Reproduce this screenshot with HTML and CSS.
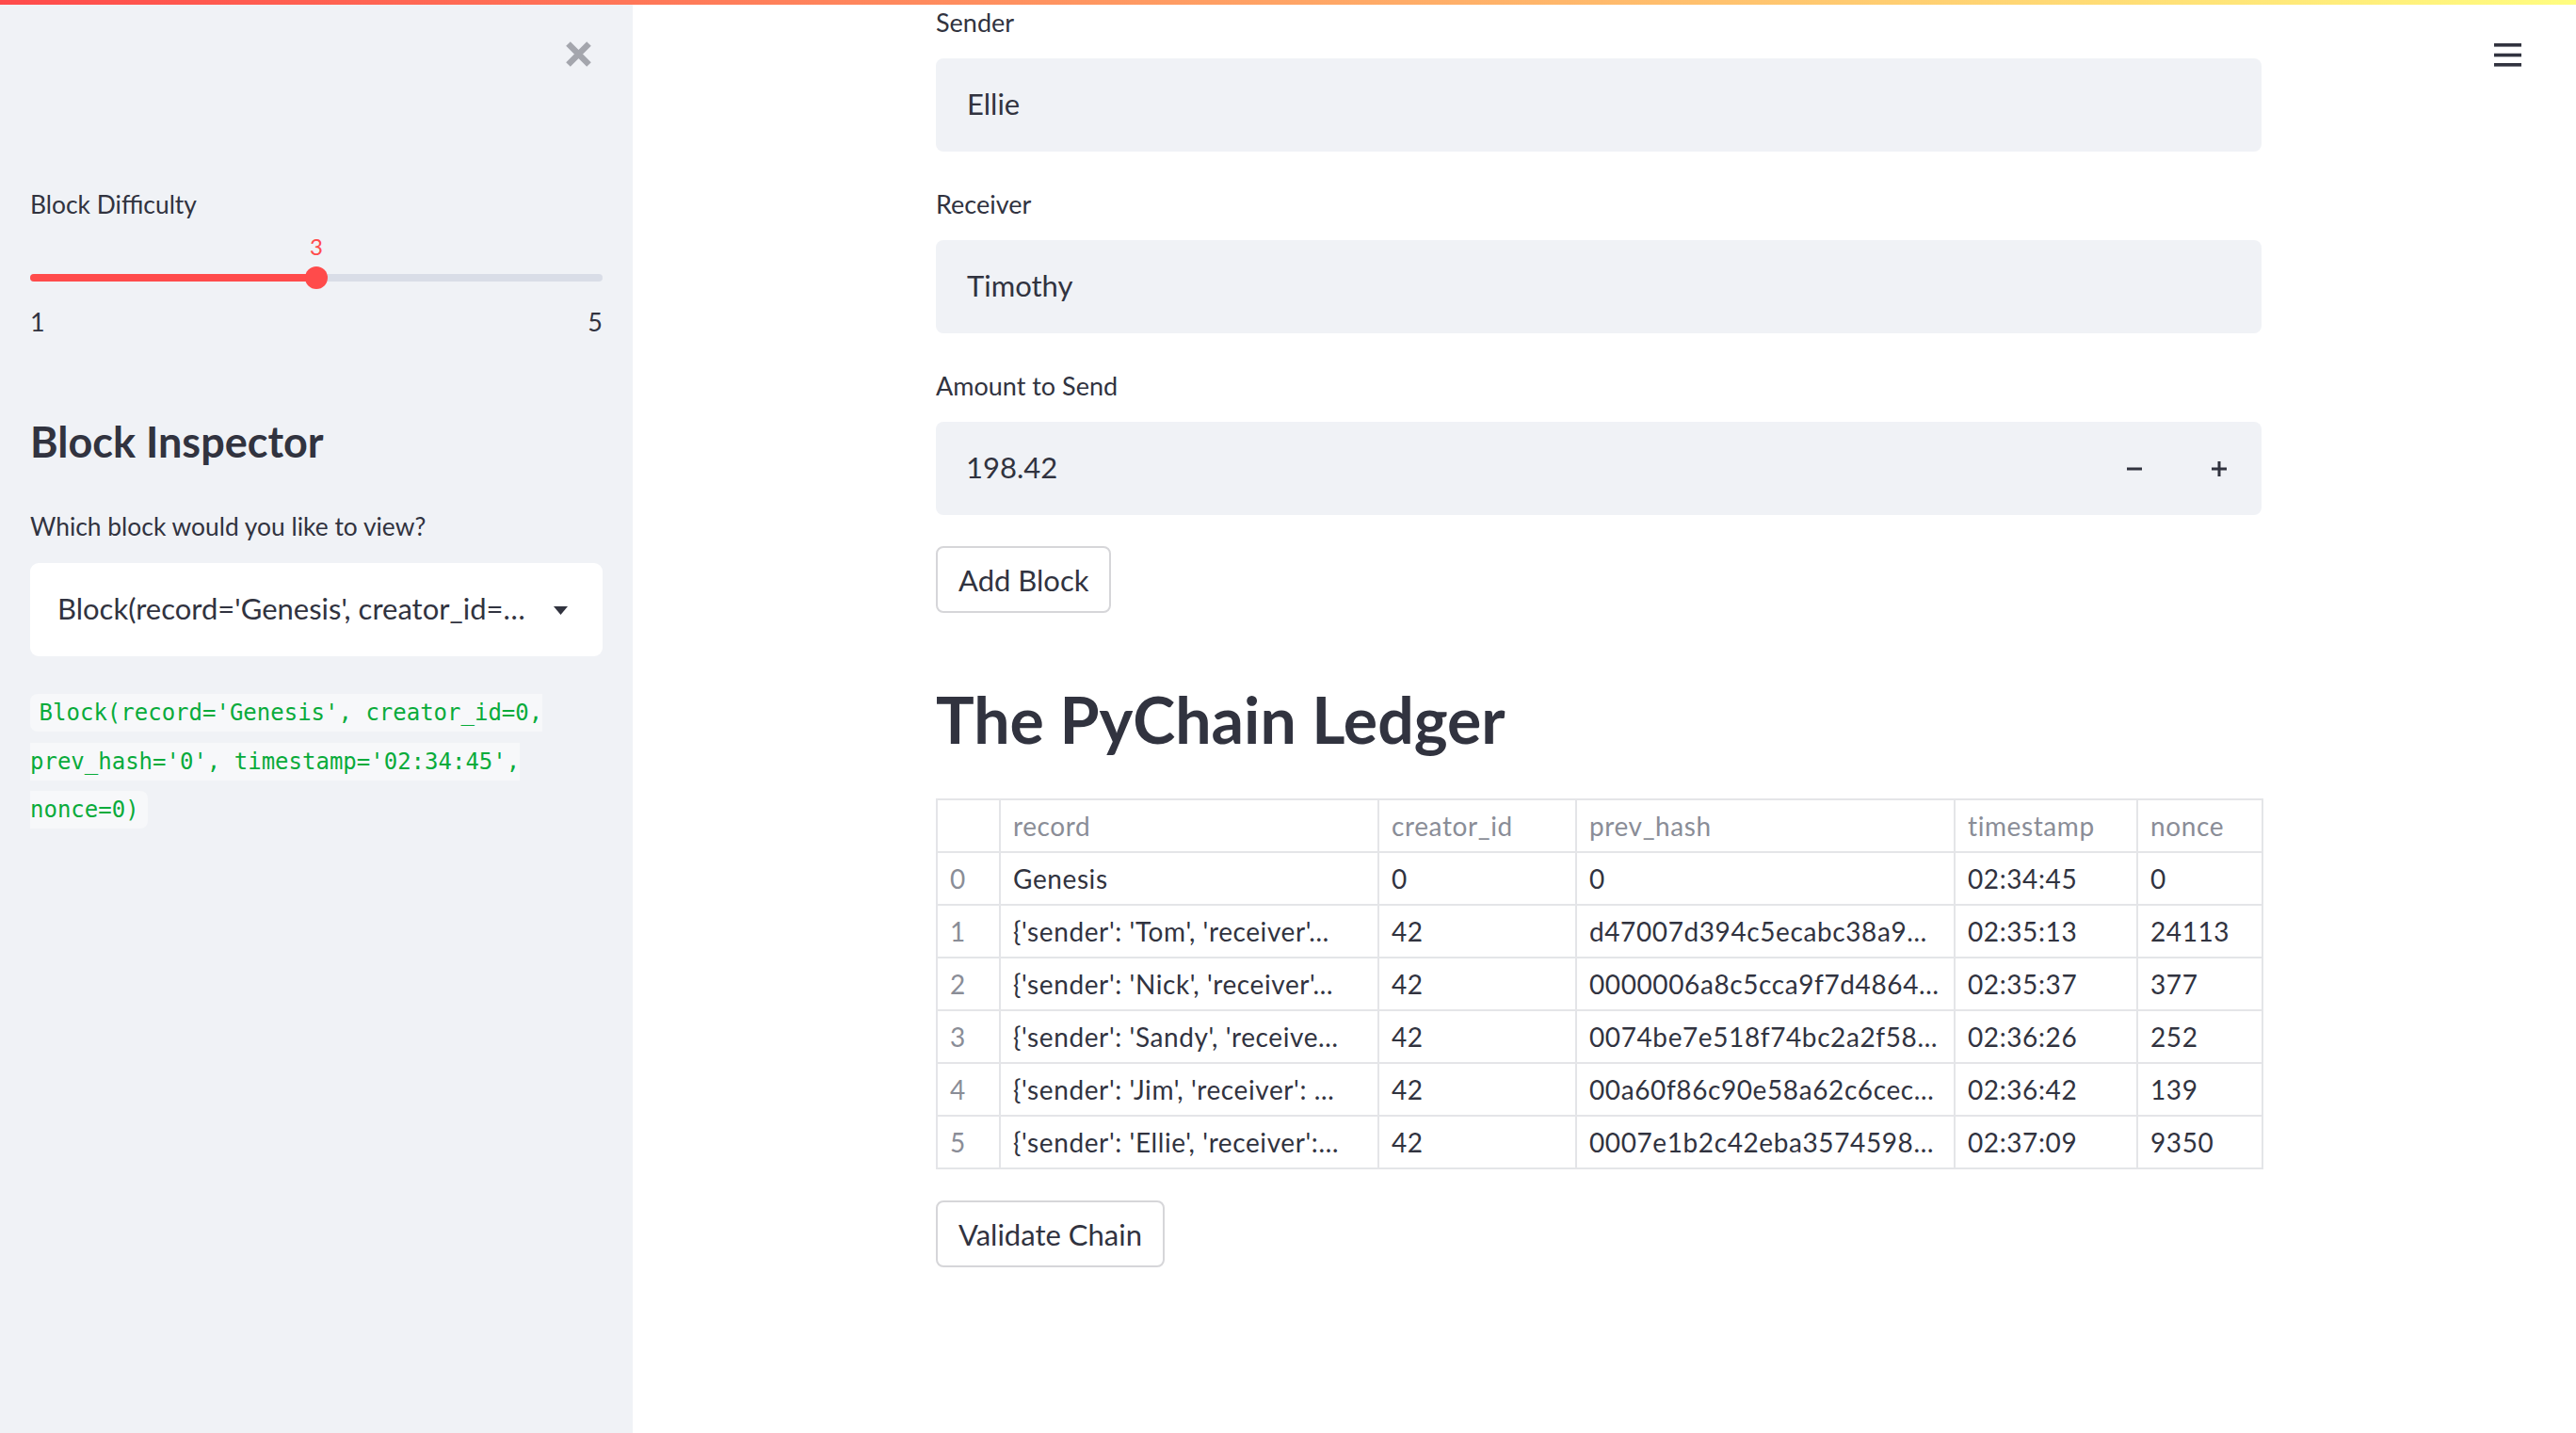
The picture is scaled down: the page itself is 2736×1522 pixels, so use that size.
FILE: index.html
```html
<!DOCTYPE html>
<html lang="en">
<head>
<meta charset="utf-8">
<title>PyChain</title>
<link rel="stylesheet" href="styles.css">
</head>
<body>
<div class="app">
  <div class="decoration"></div>
  <button class="menu-btn" aria-label="Main menu">
    <svg width="29" height="25" viewBox="0 0 29 25"><rect x="0" y="0" width="29" height="3.6"/><rect x="0" y="10.7" width="29" height="3.6"/><rect x="0" y="21" width="29" height="3.6"/></svg>
  </button>

  <aside class="sidebar">
    <div class="sidebar-top">
      <svg class="close-icon" viewBox="0 0 29 29"><path d="M3.5 3.5 L25.5 25.5 M25.5 3.5 L3.5 25.5" stroke="#a4a6ad" stroke-width="6.5" fill="none"/></svg>
    </div>

    <div class="widget-label sb-label slider-label">Block Difficulty</div>
    <div class="slider">
      <div class="slider-value-row"><span class="slider-value" style="left:50%">3</span></div>
      <div class="track-wrap">
        <div class="track"><div class="track-fill" style="width:50%"></div></div>
        <div class="thumb" style="left:50%"></div>
      </div>
      <div class="ticks"><span>1</span><span>5</span></div>
    </div>

    <h2 class="sb-heading">Block Inspector</h2>
    <div class="widget-label sb-label sb-select-label">Which block would you like to view?</div>
    <div class="select">
      <span class="select-text">Block(record='Genesis', creator_id=0, prev_hash='0', timestamp='02:34:45', nonce=0)</span>
      <svg class="select-arrow" viewBox="0 0 15 9"><polygon points="0,0 15,0 7.5,9"/></svg>
    </div>

    <p class="code-para"><code>Block(record='Genesis', creator_id=0, prev_hash='0', timestamp='02:34:45', nonce=0)</code></p>
  </aside>

  <main class="main">
    <div class="block">
      <div class="widget-label">Sender</div>
      <div class="text-input">Ellie</div>

      <div class="widget-label gap">Receiver</div>
      <div class="text-input">Timothy</div>

      <div class="widget-label gap">Amount to Send</div>
      <div class="number-input">
        <div class="number-value">198.42</div>
        <div class="step"><svg width="16" height="16" viewBox="0 0 16 16"><rect x="0" y="6.5" width="16" height="3"/></svg></div>
        <div class="step"><svg width="16" height="16" viewBox="0 0 16 16"><rect x="0" y="6.5" width="16" height="3"/><rect x="6.5" y="0" width="3" height="16"/></svg></div>
      </div>

      <button class="btn add-btn">Add Block</button>

      <h1 class="title">The PyChain Ledger</h1>

      <table class="ledger">
        <colgroup>
          <col class="c-idx"><col class="c-record"><col class="c-creator"><col class="c-hash"><col class="c-time"><col class="c-nonce">
        </colgroup>
        <thead>
          <tr><th></th><th>record</th><th>creator_id</th><th>prev_hash</th><th>timestamp</th><th>nonce</th></tr>
        </thead>
        <tbody>
          <tr><td class="idx">0</td><td>Genesis</td><td>0</td><td>0</td><td>02:34:45</td><td>0</td></tr>
          <tr><td class="idx">1</td><td>{'sender': 'Tom', 'receiver'…</td><td>42</td><td>d47007d394c5ecabc38a9…</td><td>02:35:13</td><td>24113</td></tr>
          <tr><td class="idx">2</td><td>{'sender': 'Nick', 'receiver'…</td><td>42</td><td>0000006a8c5cca9f7d4864…</td><td>02:35:37</td><td>377</td></tr>
          <tr><td class="idx">3</td><td>{'sender': 'Sandy', 'receive…</td><td>42</td><td>0074be7e518f74bc2a2f58…</td><td>02:36:26</td><td>252</td></tr>
          <tr><td class="idx">4</td><td>{'sender': 'Jim', 'receiver': …</td><td>42</td><td>00a60f86c90e58a62c6cec…</td><td>02:36:42</td><td>139</td></tr>
          <tr><td class="idx">5</td><td>{'sender': 'Ellie', 'receiver':…</td><td>42</td><td>0007e1b2c42eba3574598…</td><td>02:37:09</td><td>9350</td></tr>
        </tbody>
      </table>

      <button class="btn validate-btn">Validate Chain</button>
    </div>
  </main>
</div>
</body>
</html>
```

FILE: styles.css
```css
html, body {
  margin: 0;
  padding: 0;
}

body {
  font-family: Lato, "Liberation Sans", sans-serif;
  color: #31333f;
  background: #ffffff;
}

.app {
  position: relative;
  display: flex;
  height: 1522px;
  overflow: hidden;
}

.decoration {
  position: absolute;
  top: 0;
  left: 0;
  right: 0;
  height: 5px;
  background: linear-gradient(90deg, #ff4b4b, #fffd80);
  z-index: 5;
}

.menu-btn {
  position: absolute;
  top: 46px;
  right: 58px;
  padding: 0;
  border: 0;
  background: none;
  line-height: 0;
  fill: #31333f;
}

/* ---------- sidebar ---------- */
.sidebar {
  flex: none;
  width: 672px;
  box-sizing: border-box;
  background: #f0f2f6;
  padding: 43px 32px 0;
}

.sidebar-top {
  display: flex;
  justify-content: flex-end;
  height: 29px;
  padding-right: 11px;
}

.close-icon {
  width: 29px;
  height: 29px;
}

.widget-label {
  font-size: 27px;
  line-height: 40px;
  margin-bottom: 18px;
}

.sb-label {
  font-size: 26.4px;
}

.slider-label {
  margin-top: 125px;
  margin-bottom: 10px;
}

.slider-value-row {
  position: relative;
  height: 30px;
}

.slider-value {
  position: absolute;
  top: 0;
  transform: translateX(-50%);
  font-size: 24px;
  line-height: 30px;
  color: #ff4b4b;
}

.track-wrap {
  position: relative;
  height: 24px;
  margin-top: 6px;
  display: flex;
  align-items: center;
}

.track {
  flex: 1;
  height: 8px;
  border-radius: 4px;
  background: #d9dde7;
  overflow: hidden;
}

.track-fill {
  height: 100%;
  background: #ff4b4b;
}

.thumb {
  position: absolute;
  top: 0;
  width: 24px;
  height: 24px;
  margin-left: -12px;
  border-radius: 50%;
  background: #ff4b4b;
}

.ticks {
  display: flex;
  justify-content: space-between;
  font-size: 27px;
  line-height: 40px;
  margin-top: 15px;
}

.sb-heading {
  margin: 81px 0 0;
  font-size: 45px;
  line-height: 52px;
  font-weight: 700;
}

.sb-select-label {
  margin-top: 44px;
  margin-bottom: 19px;
}

.select {
  display: flex;
  align-items: center;
  height: 99px;
  box-sizing: border-box;
  background: #ffffff;
  border-radius: 9px;
  padding: 0 0 3px 29px;
  font-size: 31px;
}

.select-text {
  flex: 1;
  min-width: 0;
  white-space: nowrap;
  overflow: hidden;
  text-overflow: ellipsis;
}

.select-arrow {
  flex: none;
  width: 15px;
  height: 9px;
  margin: 4px 37px 0 23px;
  fill: #31333f;
}

.code-para {
  margin: 35px 0 0;
  font-family: "DejaVu Sans Mono", "Liberation Mono", monospace;
  font-size: 24px;
  line-height: 51.5px;
}

.code-para code {
  font-family: inherit;
  color: #09ab3b;
  background: #f7f8fa;
  padding: 6px 9.6px;
  border-radius: 8px;
}

/* ---------- main ---------- */
.main {
  flex: 1;
  display: flex;
  justify-content: center;
  padding: 4px 12px 0 0;
}

.block {
  width: 1408px;
}

.gap {
  margin-top: 36px;
}

.text-input {
  display: flex;
  align-items: center;
  height: 99px;
  box-sizing: border-box;
  background: #f0f2f6;
  border-radius: 8px;
  padding: 0 33px 3px;
  font-size: 31px;
}

.number-input {
  display: flex;
  height: 99px;
  background: #f0f2f6;
  border-radius: 8px;
}

.number-value {
  flex: 1;
  display: flex;
  align-items: center;
  padding: 0 32px 3px;
  font-size: 31px;
}

.step {
  width: 90px;
  display: flex;
  align-items: center;
  justify-content: center;
  fill: #31333f;
}

.btn {
  display: block;
  height: 71px;
  padding: 0 22px;
  border: 2px solid #d6d6d9;
  border-radius: 8px;
  background: #ffffff;
  color: #31333f;
  font-family: inherit;
  font-size: 31px;
}

.add-btn {
  margin-top: 33px;
}

.title {
  margin: 73px 0 0;
  font-size: 68px;
  line-height: 80px;
  font-weight: 700;
}

.ledger {
  margin-top: 44px;
  width: 1408px;
  table-layout: fixed;
  border-collapse: collapse;
  font-size: 28px;
  letter-spacing: 0.6px;
}

.c-idx { width: 67px; }
.c-record { width: 402px; }
.c-creator { width: 210px; }
.c-hash { width: 402px; }
.c-time { width: 194px; }
.c-nonce { width: 133px; }

.ledger th,
.ledger td {
  height: 54px;
  padding: 0 13px;
  border: 2px solid #e4e5e8;
  text-align: left;
  font-weight: 400;
  white-space: nowrap;
  overflow: hidden;
  text-overflow: ellipsis;
}

.ledger th,
.ledger td.idx {
  color: #8a8d97;
}

.validate-btn {
  margin-top: 33px;
}
```
